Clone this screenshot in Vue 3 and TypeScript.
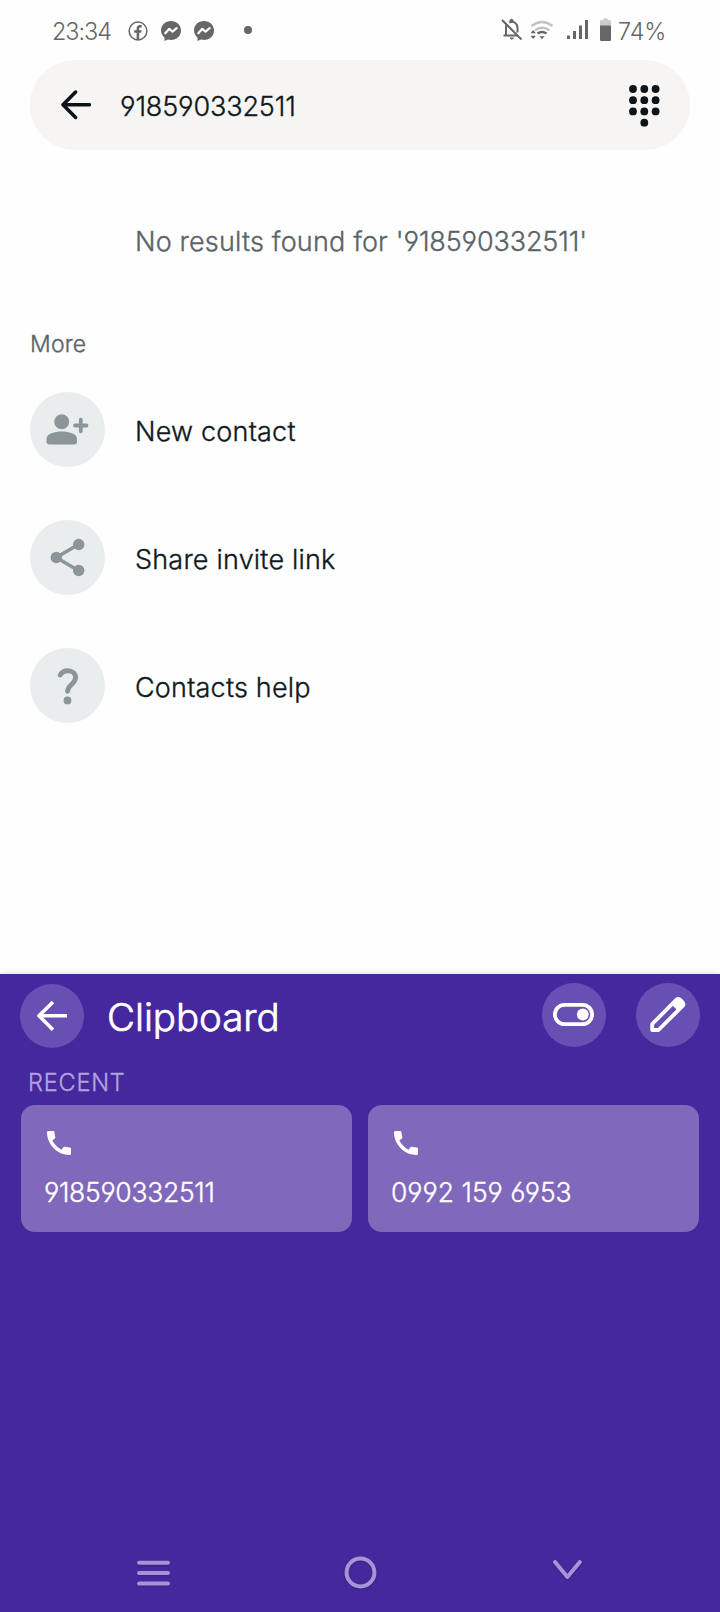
<script setup lang="ts">
interface Action {
  id: string
  label: string
}

interface Clip {
  id: number
  text: string
}

const query = '918590332511'

const actions: Action[] = [
  { id: 'add', label: 'New contact' },
  { id: 'share', label: 'Share invite link' },
  { id: 'help', label: 'Contacts help' },
]

const clips: Clip[] = [
  { id: 1, text: '918590332511' },
  { id: 2, text: '0992 159 6953' },
]

const dialDots: [number, number][] = []
for (let row = 0; row < 3; row++) {
  for (let col = 0; col < 3; col++) dialDots.push([4 + col * 11.3, 4 + row * 11.2])
}
dialDots.push([15.3, 37.7])
</script>

<template>
  <div class="screen">
    <header class="status">
      <span class="time">23:34</span>
      <svg class="fb" width="20" height="20" viewBox="0 0 20 20">
        <circle cx="10" cy="10" r="8.9" fill="none" stroke="#666" stroke-width="1.5" />
        <path d="M8.6 18.8V11.8H6.2V9.2h2.4V7.6c0-2.4 1.3-3.6 3.4-3.6h1.7v2.4h-1.2c-1 0-1.3.5-1.3 1.4v1.4h2.4l-.4 2.6h-2v7z" fill="#666" />
      </svg>
      <svg v-for="n in 2" :key="n" class="msgr" width="20" height="20" viewBox="0 0 20 20">
        <path d="M10 0C4.4 0 0 4 0 9.5c0 2.8 1.300 5.200 3.500 6.900V20l3.500-1.400c1 .3 2 .4 3 .4 5.600 0 10-4 10-9.500S15.600 0 10 0z" fill="#666" />
        <path d="M4.300 12.300l4-4.500 3.200 2.900 4.200-3.600" fill="none" stroke="#fff" stroke-width="2.200" stroke-linejoin="round" stroke-linecap="round" />
      </svg>
      <i class="dot"></i>
      <span class="spacer"></span>
      <svg class="bell" width="22" height="24" viewBox="0 0 22 24" fill="none" stroke="#666">
        <path d="M2.500 17.500h14M5 17V9.500q0-1.500.700-2.700M8.200 4.700C12.500 2.300 16.500 5.500 16.500 10v4.500" stroke-width="2" />
        <path d="M9 3.500V2.400q0-1.200 1.500-1.200T12 2.400v1.100zM9 20h3.500q-1.700 2.500-3.500 0z" fill="#666" stroke-width="1" />
        <path d="M1 2l19.500 19.500" stroke-width="2" />
      </svg>
      <svg class="wifi" width="24" height="22" viewBox="0 0 24 22" fill="none">
        <path d="M1.500 6Q12 -2 22.500 6M5 10.300Q12 5 19.500 10.300" stroke="#c2c2c2" stroke-width="2.400" />
        <path d="M7.500 13.500q4.500-3 9 0" stroke="#666" stroke-width="2.400" />
        <path d="M.500 13.300L3.200 10l2.700 3.300zM.500 15.700L3.200 19l2.700-3.300zM9.500 16.300h5L12 19.300z" fill="#666" />
      </svg>
      <svg class="signal" width="22" height="20" viewBox="0 0 22 20" fill="#666">
        <path d="M0 15.500h3V19H0zM6 11h3v8H6zM12 5.500h3V19h-3zM18 0h3v19h-3z" />
      </svg>
      <svg class="battery" width="11" height="24" viewBox="0 0 11 24">
        <path d="M0 8V3.500Q0 2 1.500 2H3Q3 0 5.500 0T8 2h1.500Q11 2 11 3.500V8z" fill="#ccc" />
        <path d="M0 7.500h11v14Q11 23 9.500 23h-8Q0 23 0 21.500z" fill="#666" />
      </svg>
      <span class="percent">74%</span>
    </header>

    <div class="search">
      <svg width="30" height="30" viewBox="0 0 30 30" fill="none" stroke="#0d1418" stroke-width="3.500" stroke-linecap="round" stroke-linejoin="round">
        <path d="M14.600 2L2 14.700l12.600 12.700M2.500 14.700h26" />
      </svg>
      <span class="query">{{ query }}</span>
      <svg class="dial" width="31" height="42" viewBox="0 0 31 42" fill="#0d1418">
        <circle v-for="([x, y], i) in dialDots" :key="i" :cx="x" :cy="y" r="3.900" />
      </svg>
    </div>

    <p class="empty">No results found for <span>'{{ query }}'</span></p>
    <h2 class="more">More</h2>

    <ul class="actions">
      <li v-for="a in actions" :key="a.id">
        <span class="badge">
          <svg v-if="a.id === 'add'" width="75" height="75" viewBox="0 0 75 75" fill="#8c9599">
            <circle cx="31.700" cy="29.700" r="7.500" />
            <path d="M16.500 47c0-5.500 8-7.500 15.200-7.500S47 41.500 47 47v2.500q0 3-3 3H19.500q-3 0-3-3z" />
            <path d="M45 33.500h11.500M50.800 27.700v11.600" fill="none" stroke="#8c9599" stroke-width="3.800" stroke-linecap="round" />
          </svg>
          <svg v-else-if="a.id === 'share'" width="75" height="75" viewBox="0 0 75 75" fill="#8c9599">
            <path d="M48.700 24.300L26.300 37.500l22.400 13.200" fill="none" stroke="#8c9599" stroke-width="3.400" />
            <circle cx="48.700" cy="24.500" r="5.700" />
            <circle cx="26.300" cy="37.500" r="5.700" />
            <circle cx="48.700" cy="50.500" r="5.700" />
          </svg>
          <svg v-else width="75" height="75" viewBox="0 0 75 75" fill="#8c9599">
            <path d="M30.300 27c1.400-2.800 4.200-4.300 7.400-4.300 4.500 0 7.900 2.800 7.900 6.900 0 5.900-7.600 7.400-8 13.600" fill="none" stroke="#8c9599" stroke-width="4.900" stroke-linecap="round" />
            <circle cx="37.500" cy="52.400" r="3.900" />
          </svg>
        </span>
        <span class="label">{{ a.label }}</span>
      </li>
    </ul>

    <section class="panel">
      <div class="toolbar">
        <span class="round back">
          <svg width="64" height="64" viewBox="0 0 64 64" fill="none" stroke="#fff" stroke-width="3.600" stroke-linejoin="round">
            <path d="M33 18L19 31.800l14 14M19.500 31.800H47" />
          </svg>
        </span>
        <h1>Clipboard</h1>
        <span class="round">
          <svg width="64" height="64" viewBox="0 0 64 64">
            <rect x="12.900" y="21.900" width="37.200" height="19.200" rx="9.600" fill="none" stroke="#fff" stroke-width="3.800" />
            <circle cx="40.800" cy="31.500" r="5.900" fill="#fff" />
          </svg>
        </span>
        <span class="round">
          <svg width="64" height="64" viewBox="0 0 64 64">
            <path d="M16.200 47V41L40.500 16.700q1.800-1.500 3.500 0l2.700 2.700q1.500 1.800 0 3.500L22.500 47z" fill="none" stroke="#fff" stroke-width="3.800" stroke-linejoin="round" />
            <path d="M35.500 21.500l5-5q2-1.500 4 0l2.200 2.400q1.500 1.800 0 3.600l-5 5z" fill="#fff" />
          </svg>
        </span>
      </div>
      <h3>RECENT</h3>
      <div class="cards">
        <article v-for="c in clips" :key="c.id">
          <svg width="24" height="24" viewBox="3 3 18 18" fill="#fff">
            <path d="M20.010 15.380c-1.230 0-2.420-.2-3.530-.560-.350-.120-.740-.030-1.010.240l-1.570 1.970c-2.830-1.350-5.480-3.900-6.890-6.830l1.950-1.660c.270-.280.350-.670.240-1.020-.370-1.110-.560-2.300-.560-3.530 0-.540-.450-.990-.990-.990H4.190C3.650 3 3 3.240 3 3.990 3 13.280 10.730 21 20.010 21c.710 0 .990-.630.990-1.180v-3.450c0-.540-.450-.990-.990-.990z" />
          </svg>
          <p :class="{ spaced: c.text.includes(' ') }">{{ c.text }}</p>
        </article>
      </div>
      <nav>
        <svg width="33" height="26" viewBox="0 0 33 26">
          <path d="M2 2.800h29M2 13.100h29M2 23.400h29" />
        </svg>
        <svg class="home" width="33" height="33" viewBox="0 0 33 33">
          <circle cx="16.500" cy="16.500" r="13.900" />
        </svg>
        <svg class="chevron" width="33" height="26" viewBox="0 0 33 26">
          <path d="M4 4l12.400 15L28.800 4" />
        </svg>
      </nav>
    </section>
  </div>
</template>

<style>
html,
body {
  margin: 0;
  background: #fff;
}
</style>

<style scoped>
.screen {
  width: 720px;
  height: 1612px;
  display: flex;
  flex-direction: column;
  overflow: hidden;
  background: #fefefe;
  color: #11181c;
  font-family: Inter, Roboto, sans-serif;
  font-weight: 300;
  font-feature-settings: 'cv03', 'cv04';
  -webkit-text-stroke: 0.35px currentColor;
  white-space: nowrap;
}
svg {
  display: block;
  flex: none;
}
h1,
h2,
h3,
p,
ul {
  margin: 0;
  padding: 0;
  font-weight: 300;
}
.status {
  height: 60px;
  flex: none;
  display: flex;
  align-items: center;
  box-sizing: border-box;
  padding: 3px 0 0 52px;
  color: #666;
  font-size: 23.500px;
  -webkit-text-stroke-width: 0;
}
.time {
  width: 76px;
  letter-spacing: -1.1px;
}
.fb {
  margin-top: -2px;
}
.msgr {
  margin: -1px 0 0 13px;
}
.dot {
  width: 8px;
  height: 8px;
  margin: -3px 0 0 30px;
  border-radius: 50%;
  background: #666;
}
.spacer {
  flex: 1;
}
.bell {
  margin-top: -3px;
}
.wifi {
  margin: -1px 0 0 7px;
}
.signal {
  margin: -3px 0 0 13px;
}
.battery {
  margin: -3px 0 0 11px;
}
.percent {
  width: 102px;
  margin-left: 7px;
  letter-spacing: -0.1px;
}
.search {
  height: 90px;
  flex: none;
  margin: 0 30px;
  box-sizing: border-box;
  display: flex;
  align-items: center;
  padding: 0 30px 0 31px;
  border-radius: 45px;
  background: #f6f5f4;
}
.query {
  flex: 1;
  margin-left: 29px;
  padding-top: 3px;
  font-size: 27px;
  letter-spacing: -0.15px;
}
.search > .dial {
  margin-top: 1px;
}
.empty {
  margin-top: 72px;
  height: 40px;
  line-height: 40px;
  padding-left: 135px;
  color: #5b6368;
  font-size: 27px;
  letter-spacing: 0.17px;
}
.empty span {
  letter-spacing: -0.15px;
}
.more {
  margin-top: 62px;
  height: 40px;
  line-height: 40px;
  padding-left: 30px;
  color: #5b6368;
  font-size: 23px;
  letter-spacing: 0.2px;
}
.actions {
  list-style: none;
  margin: 28px 0 0 30px;
  display: flex;
  flex-direction: column;
  gap: 53px;
}
.actions li {
  height: 75px;
  display: flex;
  align-items: center;
  gap: 30px;
}
.badge {
  border-radius: 50%;
  background: #e9eded;
}
.label {
  padding-top: 4px;
  font-size: 27px;
  letter-spacing: 0.2px;
}
.panel {
  margin-top: auto;
  height: 638px;
  flex: none;
  display: flex;
  flex-direction: column;
  background: #45289e;
  box-shadow: 0 0 6px rgba(0, 0, 0, 0.15);
  color: #fff;
}
.toolbar {
  display: flex;
  padding: 9px 20px 0;
  height: 65px;
}
.round {
  width: 64px;
  height: 64px;
  border-radius: 50%;
  background: #684fb3;
}
.round + .round {
  margin-left: 30px;
}
.back {
  margin-top: 1px;
}
h1 {
  flex: 1;
  margin-left: 23px;
  line-height: 69px;
  font-size: 38.500px;
  letter-spacing: -0.05px;
  -webkit-text-stroke-width: 0.7px;
}
h3 {
  margin-top: 14px;
  padding-left: 28px;
  height: 43px;
  line-height: 41px;
  color: #b3a4dc;
  font-size: 23.500px;
  letter-spacing: 0.8px;
}
.cards {
  display: grid;
  grid-template-columns: 331px 331px;
  gap: 16px;
  padding-left: 21px;
}
article {
  height: 127px;
  box-sizing: border-box;
  padding: 26px 23px 0;
  border-radius: 14px;
  background: #8068bb;
}
article svg {
  margin-left: 3px;
}
article p {
  margin-top: 17px;
  line-height: 41px;
  font-size: 26.500px;
  letter-spacing: -0.3px;
}
article .spaced {
  letter-spacing: -0.02px;
}
nav {
  margin-top: auto;
  height: 78px;
  display: flex;
  justify-content: space-between;
  align-items: center;
  padding: 0 136px 0 137px;
}
nav svg {
  fill: none;
  stroke: #a594d6;
  stroke-width: 4;
  stroke-linecap: round;
  stroke-linejoin: round;
  filter: drop-shadow(0 1px 1px rgba(0, 0, 0, 0.2));
}
nav .home {
  margin-top: -2px;
}
nav .chevron {
  margin-top: -5px;
}
</style>
